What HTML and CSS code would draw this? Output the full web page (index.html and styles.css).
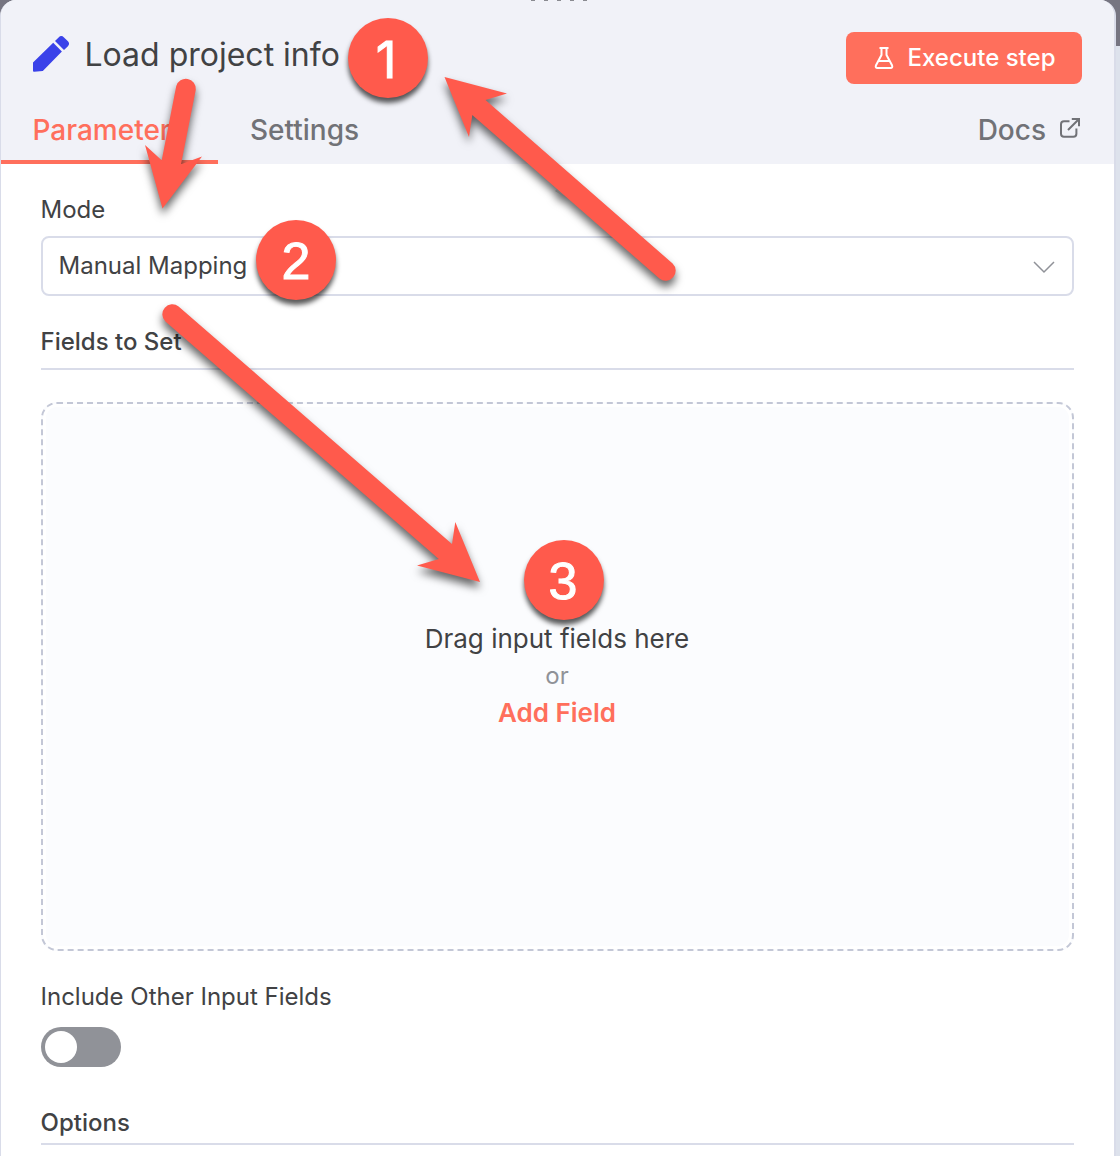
FILE: index.html
```html
<!DOCTYPE html>
<html lang="en">
<head>
<meta charset="utf-8">
<title>Load project info</title>
<link rel="stylesheet" href="styles.css">
</head>
<body>
<main class="panel">
  <header class="header">
    <div class="drag-handle"><i></i><i></i><i></i><i></i><i></i></div>
    <div class="title-row">
      <svg class="pencil" width="36" height="36" viewBox="0 0 36 36"><path fill="#3a42e9" d="M0 26.5 20.2 6.8l8.7 8.7L9.8 35 1.2 35.8Q0 36 0 34.8ZM22 5l3.6-3.6q2.7-2.7 5.4 0l3.7 3.7q2.700 2.700 0 5.400L31 14Z"/></svg>
      <h1 class="title">Load project info</h1>
      <button class="execute">
        <svg width="20" height="24" viewBox="0 0 20 24" fill="none" stroke="currentColor" stroke-width="2" stroke-linejoin="round"><path d="M5.500 2h9M7.500 2v7L2 19.200Q1 22 3.500 22h13q2.500 0 1.500-2.800L12.500 9V2M4.600 15h10.800"/></svg>
        <span>Execute step</span>
      </button>
    </div>
    <nav class="tabs">
      <a class="tab active">Parameters</a>
      <a class="tab">Settings</a>
      <a class="docs"><span>Docs</span>
        <svg width="22" height="22" viewBox="0 0 22 22" fill="none" stroke="currentColor" stroke-width="2"><path d="M10.500 4.200H5Q2 4.200 2 7.200v9.600q0 3 3 3h9.400q3 0 3-3V11.400M12.800 2H20v7.200M20 2 9 13"/></svg>
      </a>
    </nav>
  </header>
  <section class="content">
    <label class="label">Mode</label>
    <div class="select"><span>Manual Mapping</span>
      <svg width="22" height="14" viewBox="0 0 22 14" fill="none" stroke="#909298" stroke-width="1.5"><path d="m1 2 10 10 10-10"/></svg>
    </div>
    <h2 class="section-title fields">Fields to Set</h2>
    <div class="dropzone">
      <div class="drop-text">Drag input fields here</div>
      <div class="drop-or">or</div>
      <div class="add-field">Add Field</div>
    </div>
    <label class="label include">Include Other Input Fields</label>
    <div class="switch"><span class="knob"></span></div>
    <h2 class="section-title options">Options</h2>
  </section>
</main>
<svg class="arrows" width="1120" height="1156" viewBox="0 0 1120 1156" fill="#ff5a4c">
  <path d="m551 185 7 3-3 3 8 5 6-2" fill="#777"/>
  <path d="M444.500 77 507 93.500 485.500 100 672.600 263.500A10 10 0 0 1 659.400 278.500L472.300 115 469 137Z"/>
  <path d="M162.500 208.500 145 145 161.700 160.300 176.200 86.200A10 10 0 0 1 195.800 89.800L181 164.300 202 156.500Z"/>
  <path d="M480 582 455.300 522 452 544 178.600 306.500A10 10 0 0 0 165.400 321.500L438.800 559 417 565.500Z"/>
</svg>
<div class="badge one"><span>1</span></div>
<div class="badge two"><span>2</span></div>
<div class="badge three"><span>3</span></div>
</body>
</html>
```
FILE: styles.css
```css
* { box-sizing: border-box; }
body {
  margin: 0;
  width: 1120px;
  height: 1156px;
  position: relative;
  overflow: hidden;
  background: linear-gradient(#767581 46px, #dde2ec 46px);
  font-family: Inter, sans-serif;
  color: #414244;
}
.panel {
  width: 1116px;
  height: 1176px;
  border-left: 1px solid #d9dce9;
  border-right: 2px solid #d9dce9;
  border-radius: 16px 16px 0 0;
  background: #fff;
  overflow: hidden;
}
.header {
  height: 164px;
  padding-right: 32px;
  background: #f1f2f8;
  display: flex;
  flex-direction: column;
}
.drag-handle { height: 32px; padding-left: 530px; display: flex; gap: 9px; }
.drag-handle i { width: 4px; height: 1px; background: #8a8b91; }
.title-row { height: 52px; padding-left: 32px; display: flex; align-items: center; }
.pencil { margin-top: -8px; }
.title { margin: -6px 0 0 15.5px; font-size: 32px; line-height: 40px; font-weight: 400; white-space: nowrap; }
.execute {
  margin-left: auto;
  width: 236px;
  height: 52px;
  padding: 0 0 0 1px;
  border: 0;
  border-radius: 8px;
  background: #ff6f5c;
  color: #fff;
  font: 500 24px/32px Inter, sans-serif;
  display: flex;
  align-items: center;
  justify-content: center;
  gap: 14px;
}
.tabs { height: 80px; display: flex; font-size: 28px; line-height: 36px; font-weight: 500; color: #717277; }
.tab { padding: 28px 32px 0; }
.tab.active { width: 217px; padding-left: 31.5px; color: #ff6f5c; border-bottom: 4px solid #ff6f5c; }
.docs { margin-left: auto; padding: 28px 1px 0 0; display: flex; gap: 13px; }
.docs svg { margin-top: 5px; }
.content { padding: 30px 40px 0; display: flex; flex-direction: column; }
.label { font-size: 24px; line-height: 32px; text-indent: -0.5px; }
.select {
  height: 60px;
  margin-top: 10px;
  padding: 0 17px 2px 15.5px;
  border: 2px solid #d9dce9;
  border-radius: 8px;
  display: flex;
  align-items: center;
  justify-content: space-between;
  font-size: 24px;
}
.select svg { margin-top: 3px; }
.section-title { margin: 0; border-bottom: 2px solid #d9dce9; font-size: 24px; line-height: 32px; font-weight: 500; text-indent: -0.5px; }
.fields { height: 44px; margin-top: 30px; }
.dropzone {
  height: 549px;
  margin-top: 32px;
  padding: 0 1px 3px 0;
  border: 2px dashed #c3c7d6;
  border-radius: 16px;
  background: #fbfcfe;
  box-shadow: inset 0 0 0 3px #fff;
  display: flex;
  flex-direction: column;
  justify-content: center;
  text-align: center;
  font-size: 26px;
  line-height: 37px;
}
.drop-or { font-size: 24px; color: #909298; }
.add-field { font-weight: 600; color: #ff6f5c; }
.include { margin-top: 30px; }
.switch { width: 80px; height: 40px; margin-top: 14px; padding: 4px; border-radius: 20px; background: #909298; }
.knob { display: block; width: 32px; height: 32px; border-radius: 50%; background: #fff; }
.options { height: 38px; margin-top: 40px; }
.arrows { position: absolute; left: 0; top: 0; filter: drop-shadow(0 6px 4px rgba(0, 0, 0, .6)); }
.badge {
  position: absolute;
  width: 80px;
  height: 80px;
  border-radius: 50%;
  background: #ff5a4c;
  box-shadow: 0 5px 5px rgba(0, 0, 0, .65);
  color: #fff;
  font: 52px/82px "Liberation Sans", sans-serif;
  -webkit-text-stroke: 1px #fff;
  text-align: center;
}
.one { left: 348px; top: 18px; font-family: Inter, sans-serif; font-size: 51px; line-height: 83px; }
.one span { position: relative; left: -2px; }
.two { left: 256px; top: 220px; }
.three { left: 524px; top: 540px; padding-right: 2px; }
```
